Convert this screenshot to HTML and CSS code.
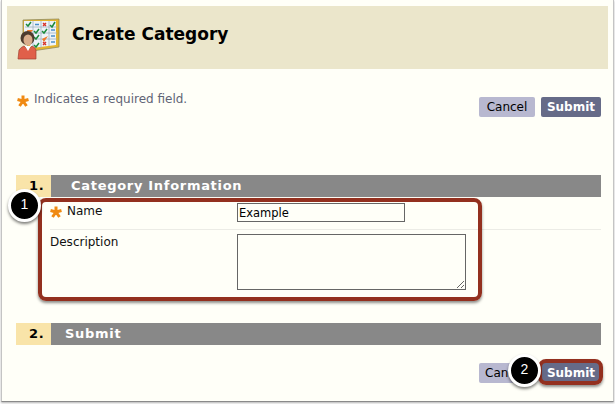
FILE: index.html
```html
<!DOCTYPE html>
<html lang="en">
<head>
<meta charset="utf-8">
<title>Create Category</title>
<link rel="stylesheet" href="styles.css">
</head>
<body>
<div class="window">
  <header class="page-head">
    <svg class="head-icon" width="44" height="42" viewBox="0 0 44 42" aria-hidden="true">
      <path d="M6 2 L42 1 L42 29 L15 33 L6 22 Z" fill="#e5b52c" stroke="#8f8a60" stroke-width=".8"/>
      <path d="M7 3 H39 V27 L15 30 L7 20 Z" fill="#eef3f8"/>
      <path d="M8 9 H40 M8 15 H40 M12 21 H40 M16 3 V31 M24 3 V30 M32 3 V28" stroke="#9fb0c0" stroke-width=".8" fill="none"/>
      <path d="M9 6 l2 2 l3 -4 M33 7 l2 2 l3 -5 M17 13 l2 2 l3 -4 M25 13 l2 2 l3 -4 M17 19 l2 2 l3 -4 M17 27 l2 2 l3 -4" stroke="#1c8a3c" stroke-width="1.500" fill="none"/>
      <path d="M26 5 l3 3 M29 5 l-3 3 M26 24 l3 3 M29 24 l-3 3" stroke="#d8342c" stroke-width="1.400"/>
      <path d="M18 6.500 h4 M34 12 h4 M34 18 h4 M34 24 h4" stroke="#4c8fc9" stroke-width="1.300"/>
      <path d="M25 21 l6 -3 l-4 6 Z" fill="#ee7a2a"/>
      <path d="M10 12 l6 0 l-4 5 Z" fill="#ee7a2a"/>
      <circle cx="10.500" cy="20" r="7" fill="#4d3b2d"/>
      <ellipse cx="11" cy="22" rx="4.500" ry="5.500" fill="#d9ae8c"/>
      <path d="M1 41 L2 32 Q4 29 7 28 L11 32 L15 28 Q18 29 19 32 L19 41 Z" fill="#e0604a" stroke="#a04030" stroke-width=".7"/>
      <path d="M8 28 L11 33 L14 28 Z" fill="#fff"/>
    </svg>
    <h1 class="page-title">Create Category</h1>
  </header>

  <div class="required-row">
    <p class="required-note"><svg class="star" viewBox="0 0 12 12" aria-hidden="true"><path d="M6 6 V0.500 M6 6 L11.500 4.500 M6 6 L9.500 11 M6 6 L2.500 11 M6 6 L0.500 4.500"/></svg>Indicates a required field.</p>
    <div class="actions">
      <button class="btn btn-cancel" type="button">Cancel</button>
      <button class="btn btn-submit" type="button">Submit</button>
    </div>
  </div>

  <section class="section section-info">
    <h2 class="section-bar"><span class="section-num">1.</span><span class="section-title section-title-wide">Category Information</span></h2>
    <div class="field-row field-row-name">
      <label class="field-label"><svg class="star star-field" viewBox="0 0 12 12" aria-hidden="true"><path d="M6 6 V0.500 M6 6 L11.500 4.500 M6 6 L9.500 11 M6 6 L2.500 11 M6 6 L0.500 4.500"/></svg>Name</label>
      <input class="text-input" type="text" value="Example">
    </div>
    <div class="field-row field-row-desc">
      <label class="field-label">Description</label>
      <textarea class="text-area"></textarea>
    </div>
  </section>

  <section class="section section-submit">
    <h2 class="section-bar"><span class="section-num">2.</span><span class="section-title">Submit</span></h2>
    <div class="actions actions-bottom">
      <button class="btn btn-cancel btn-covered" type="button">Cancel</button>
      <button class="btn btn-submit" type="button">Submit</button>
    </div>
  </section>

  <div class="hl hl-form"></div>
  <div class="hl hl-submit"></div>
  <div class="callout callout-one">1</div>
  <div class="callout callout-two">2</div>
</div>
</body>
</html>
```
FILE: styles.css
```css
html, body {
  margin: 0;
  padding: 0;
  background: #fff;
}
body {
  width: 615px;
  height: 404px;
  overflow: hidden;
  font-family: "DejaVu Sans", sans-serif;
}
.window {
  position: relative;
  box-sizing: border-box;
  width: 613px;
  height: 402px;
  margin-left: 1px;
  padding: 6px 5px 0 5px;
  background: #fffff8;
  border-left: 1px solid #c4c4c4;
  border-right: 1px solid #c4c4c4;
  border-bottom: 1px solid #8a8a8a;
  box-shadow: 0 1px 2px rgba(0,0,0,.3);
}
.page-head {
  display: flex;
  align-items: flex-start;
  height: 63px;
  background: #ebe6cb;
}
.head-icon {
  flex: none;
  margin: 12px 0 0 10px;
}
.page-title {
  margin: 15px 0 0 11px;
  font-size: 17px;
  line-height: 27px;
  font-weight: 700;
  color: #000;
}
.required-row {
  display: flex;
  justify-content: space-between;
  height: 106px;
  padding: 0 7px 0 9px;
}
.required-note {
  display: flex;
  margin: 23px 0 0;
  font-size: 12px;
  line-height: 15px;
  color: #5f6476;
}
.star {
  flex: none;
  width: 12px;
  height: 12px;
  margin: 3px 5px 0 1px;
  fill: none;
  stroke: #f08a12;
  stroke-width: 3;
}
.star-field {
  margin: 2px 5px 0 0;
}
.actions {
  display: flex;
  gap: 6px;
  margin-top: 28px;
  height: 20px;
}
.btn {
  margin: 0;
  padding: 0;
  height: 20px;
  border: 0;
  border-radius: 2px;
  font-family: inherit;
  font-size: 12px;
  line-height: 20px;
}
.btn-cancel {
  width: 56px;
  background: #b8b8d0;
  color: #000;
}
.btn-submit {
  width: 60px;
  background: #666b88;
  color: #fff;
  font-weight: 700;
}
.section {
  margin: 0 7px 0 9px;
}
.section-bar {
  display: flex;
  height: 22px;
  margin: 0;
  background: #888;
  font-size: 13px;
  line-height: 22px;
  font-weight: 700;
  letter-spacing: .7px;
}
.section-num {
  width: 35px;
  padding-left: 13px;
  box-sizing: border-box;
  background: #f9e4a9;
  color: #000;
}
.section-title {
  margin-left: 14px;
  color: #fff;
}
.section-title-wide {
  margin-left: 20px;
}
.section-info {
  height: 148px;
}
.field-row {
  display: flex;
  margin-left: 34px;
}
.field-row-name {
  box-sizing: border-box;
  height: 33px;
  padding-top: 6px;
  border-bottom: 1px solid #ecece6;
}
.field-row-desc {
  padding-top: 4px;
}
.field-label {
  display: flex;
  width: 187px;
  height: 15px;
  flex: none;
  font-size: 12px;
  line-height: 15px;
  color: #111;
}
.field-row-name .field-label {
  margin-top: 1px;
}
.field-row-desc .field-label {
  margin-top: 1px;
}
.text-input {
  box-sizing: border-box;
  width: 168px;
  height: 19px;
  margin: 0;
  padding: 0 1px;
  border: 1px solid #666;
  border-radius: 0;
  outline: 0;
  background: #fffff8;
  font-family: inherit;
  font-size: 11.500px;
  color: #000;
}
.text-area {
  box-sizing: border-box;
  width: 229px;
  height: 56px;
  margin: 0;
  padding: 0;
  border: 1px solid #666;
  border-radius: 0;
  outline: 0;
  background: #fffff8;
}
.actions-bottom {
  justify-content: flex-end;
  margin-top: 18px;
}
.btn-covered {
  text-align: left;
  padding-left: 6px;
  overflow: hidden;
}
.hl {
  position: absolute;
  box-sizing: border-box;
  border: 4px solid #93301f;
  box-shadow: 0 2px 3px rgba(0,0,0,.45);
}
.hl-form {
  left: 36px;
  top: 198px;
  width: 444px;
  height: 103px;
  border-radius: 8px;
}
.hl-submit {
  left: 536px;
  top: 359px;
  width: 65px;
  height: 26px;
  border-radius: 8px;
}
.callout {
  position: absolute;
  box-sizing: border-box;
  width: 33px;
  height: 33px;
  border: 3px solid #fff;
  border-radius: 50%;
  background: #000;
  box-shadow: 0 2px 3px rgba(0,0,0,.5);
  color: #fff;
  font-family: "Liberation Sans", sans-serif;
  font-size: 14px;
  line-height: 24px;
  text-align: center;
}
.callout-one {
  left: 6px;
  top: 189px;
}
.callout-two {
  left: 506px;
  top: 354px;
}
```
